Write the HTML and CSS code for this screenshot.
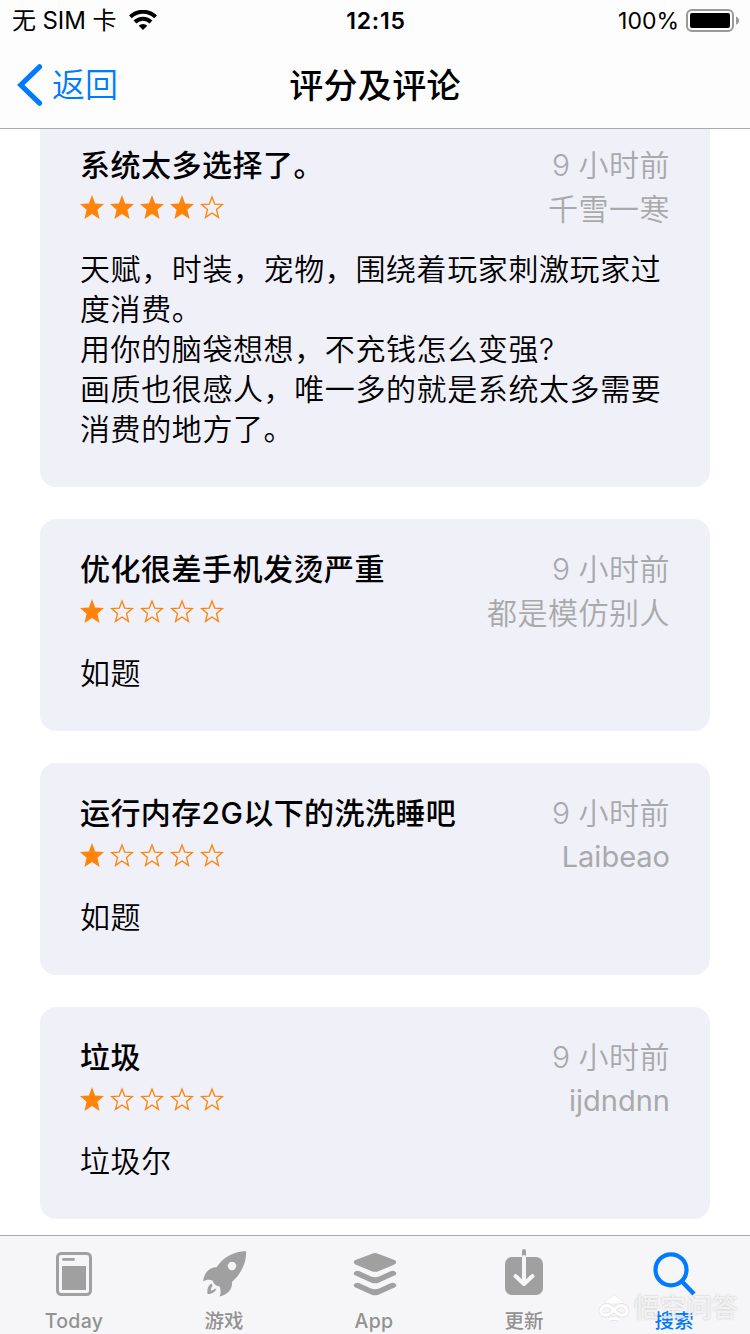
FILE: index.html
```html
<!DOCTYPE html>
<html lang="zh-CN">
<head>
<meta charset="utf-8">
<title>评分及评论</title>
<link rel="stylesheet" href="styles.css">
</head>
<body>
<svg width="0" height="0" class="defs">
  <defs>
    <path id="star" d="M12 0L15.100 8.500L24 8.900L17.400 14.700L19.600 24L12 19L4.400 24L6.600 14.700L0 8.900L8.900 8.500z"/>
    <path id="star-o" d="M12 2L14.700 9.100L22.400 9.500L16.500 14.500L18.500 22.400L12 18L5.500 22.400L7.500 14.500L1.600 9.500L9.300 9.100z"/>
    <g id="s4">
      <g fill="#ff8409"><use href="#star"/><use href="#star" x="30"/><use href="#star" x="60"/><use href="#star" x="90"/></g>
      <use href="#star-o" x="120" fill="none" stroke="#ff8409" stroke-width="1.3"/>
    </g>
    <g id="s1">
      <use href="#star" fill="#ff8409"/>
      <g fill="none" stroke="#ff8409" stroke-width="1.3"><use href="#star-o" x="30"/><use href="#star-o" x="60"/><use href="#star-o" x="90"/><use href="#star-o" x="120"/></g>
    </g>
  </defs>
</svg>
<div class="screen">
  <header class="header">
    <div class="status">
      <div class="carrier"><span>无 SIM 卡</span>
        <svg width="28" height="20" viewBox="0 0 28 20"><g fill="none" stroke="#000" stroke-width="4"><path d="M1.400 6.900a18 18 0 0 1 25.200 0"/><path d="M6 12a11.400 11.400 0 0 1 16 0"/></g><path d="M14 20l-4.300-4.200a6 6 0 0 1 8.600 0z"/></svg>
      </div>
      <div class="clock">12:15</div>
      <div class="power"><span>100%</span>
        <svg width="54" height="24" viewBox="0 0 54 24"><rect x="1" y="1" width="46" height="21" rx="5" fill="none" stroke="#999" stroke-width="2"/><rect x="4" y="4" width="40" height="15" rx="2"/><path d="M50 7.500q3 1 3 4t-3 4z" fill="#999"/></svg>
      </div>
    </div>
    <nav class="nav">
      <a class="back"><svg width="26" height="42" viewBox="0 0 26 42"><path d="M22.500 2.800L3.800 21l18.700 18.200" fill="none" stroke="#007aff" stroke-width="5.2" stroke-linecap="round"/></svg><span>返回</span></a>
      <h1>评分及评论</h1>
    </nav>
  </header>
  <main class="reviews">
    <article class="card">
      <div class="row"><h2>系统太多选择了。</h2><span class="meta">9 小时前</span></div>
      <div class="row"><svg class="stars" width="144" height="24"><use href="#s4"/></svg><span class="meta">千雪一寒</span></div>
      <p>天赋，时装，宠物，围绕着玩家刺激玩家过<br>度消费。<br>用你的脑袋想想，不充钱怎么变强?<br>画质也很感人，唯一多的就是系统太多需要<br>消费的地方了。</p>
    </article>
    <article class="card">
      <div class="row"><h2>优化很差手机发烫严重</h2><span class="meta">9 小时前</span></div>
      <div class="row"><svg class="stars" width="144" height="24"><use href="#s1"/></svg><span class="meta">都是模仿别人</span></div>
      <p>如题</p>
    </article>
    <article class="card">
      <div class="row"><h2 class="mixed">运行内存2G以下的洗洗睡吧</h2><span class="meta">9 小时前</span></div>
      <div class="row"><svg class="stars" width="144" height="24"><use href="#s1"/></svg><span class="meta latin">Laibeao</span></div>
      <p>如题</p>
    </article>
    <article class="card">
      <div class="row"><h2>垃圾</h2><span class="meta">9 小时前</span></div>
      <div class="row"><svg class="stars" width="144" height="24"><use href="#s1"/></svg><span class="meta latin">ijdndnn</span></div>
      <p>垃圾尔</p>
    </article>
  </main>
  <footer class="tabs">
    <a class="tab"><svg width="48" height="50" viewBox="0 0 48 50"><rect x="7.500" y="8.500" width="33" height="41" rx="3.800" fill="none" stroke="#a0a0a0" stroke-width="3"/><path d="M13.400 14.400h10.200" stroke="#a0a0a0" stroke-width="2.800" stroke-linecap="round"/><path d="M12 21h24v24H12z" fill="#a0a0a0"/></svg><span class="wide">Today</span></a>
    <a class="tab"><svg width="48" height="50" viewBox="0 0 48 50"><g fill="#a0a0a0"><path fill-rule="evenodd" d="M46 6C34 6.500 23 12 16.500 22.300C9 22.500 4 28 3 36.500C6 34.500 9.500 34.500 12.500 35.500Q14 40.500 19.500 41.500C21 45 21 48 19.500 51.500C27 50 32.500 45 32 37C41 29 47 17 46 6zM32 16.800a4.200 4.200 0 1 0 .01 0z"/></g><path d="M11.500 38.500C8 40.500 7 44 7.500 49C12 49 15.500 47 16.500 43.500C14 44 12.500 45.500 10.800 45.700C10.700 43.500 12 42 12.500 40.500z" fill="#a0a0a0"/></svg><span>游戏</span></a>
    <a class="tab"><svg width="48" height="50" viewBox="0 0 48 50"><path d="M22 8.700Q25 7.400 28 8.700L44.500 15Q48 17.200 44.500 19.400L29 26Q25 27.700 21 26L5.500 19.400Q2 17.200 5.500 15z" fill="#a0a0a0"/><path id="layer" d="M5.500 26.300Q7 25.300 9.500 26.300L21 31.500Q25 33 29 31.500L40.500 26.300Q43 25.300 44.500 26.300Q48 28.500 45 30.300L29 37.500Q25 39.200 21 37.500L5 30.300Q2 28.500 5.500 26.300z" fill="#a0a0a0"/><use href="#layer" y="12"/></svg><span class="wide">App</span></a>
    <a class="tab"><svg width="48" height="50" viewBox="0 0 48 50"><rect x="5" y="12" width="38" height="38" rx="7" fill="#a0a0a0"/><path d="M24 12V6" stroke="#a0a0a0" stroke-width="4" stroke-linecap="round"/><path d="M24 12v26M15.500 31l8.500 8 8.500-8" fill="none" stroke="#f6f6f8" stroke-width="4" stroke-linecap="round" stroke-linejoin="round"/></svg><span>更新</span></a>
    <a class="tab active"><svg width="48" height="50" viewBox="0 0 48 50"><circle cx="21" cy="24.800" r="15.500" fill="none" stroke="#007aff" stroke-width="4.200"/><path d="M31.500 36l12.500 13" stroke="#007aff" stroke-width="4.500"/></svg><span>搜索</span></a>
    <div class="watermark"><svg width="32" height="28" viewBox="0 0 32 28"><path d="M6 10q2-5 6-6l4-3.500 4 3.500q4 1 6 6z" fill="#fff" stroke="#e2e2e2" stroke-width=".6"/><g fill="none" stroke="#ddd" stroke-width="4.400"><path id="face" d="M16 16Q11 9.500 5.500 12.500Q.5 17 4.500 20.500Q10 23 16 16Q21 9.500 26.500 12.500Q31.500 17 27.500 20.500Q22 23 16 16z"/><path id="chin" d="M11 25.500Q16 23.500 21 25.500"/></g><g fill="none" stroke="#fff" stroke-width="3.200"><use href="#face"/><use href="#chin"/></g></svg><span>悟空问答</span></div>
  </footer>
</div>
</body>
</html>
```
FILE: styles.css
```css
* { box-sizing: border-box; }
body {
  margin: 0;
  background: #fff;
  color: #000;
  font-family: Inter, "Noto Sans CJK SC", sans-serif;
}
.defs { position: absolute; }
.screen {
  width: 750px;
  height: 1334px;
  display: flex;
  flex-direction: column;
  overflow: hidden;
}
svg { display: block; flex: none; }
h1, h2, p { margin: 0; }

.header {
  height: 129px;
  flex: none;
  background: #fdfdfd;
  border-bottom: 1px solid #a9a9b2;
}
.status {
  height: 41px;
  display: grid;
  grid-template-columns: 1fr auto 1fr;
  align-items: center;
  padding: 1px 10px 0 12px;
  font-size: 24px;
  line-height: 40px;
}
.carrier, .power { display: flex; align-items: center; }
.carrier { gap: 13px; letter-spacing: -.1px; }
.carrier svg { margin-top: -2px; }
.clock { font-weight: 600; font-size: 23px; letter-spacing: .8px; }
.power { justify-content: flex-end; gap: 7px; font-size: 23px; }
.power svg { margin-top: -1px; }
.nav {
  height: 87px;
  display: grid;
  grid-template-columns: 1fr auto 1fr;
  align-items: center;
  padding: 0 17px;
}
.back {
  display: flex;
  align-items: center;
  gap: 9px;
  color: #007aff;
  font-size: 33px;
  font-weight: 350;
  line-height: 44px;
}
.back span { padding-top: 1px; }
h1 {
  padding-top: 2px;
  font-size: 34px;
  line-height: 44px;
  font-weight: 500;
  letter-spacing: .3px;
}

.reviews {
  height: 1106px;
  flex: none;
  display: flex;
  flex-direction: column;
  justify-content: flex-end;
  gap: 32px;
  padding: 0 40px 16px;
  overflow: hidden;
}
.card {
  flex: none;
  padding: 28px 40px 38px;
  border-radius: 16px;
  background: #f0f0f9;
}
.row {
  height: 44px;
  display: flex;
  justify-content: space-between;
  line-height: 44px;
}
h2 {
  font-size: 30px;
  line-height: 44px;
  font-weight: 500;
  letter-spacing: .5px;
}
.mixed { letter-spacing: .4px; }
.meta {
  color: #a9a9ab;
  font-size: 30px;
  font-weight: 350;
  letter-spacing: .5px;
  word-spacing: -1px;
}
.latin { font-size: 29px; font-weight: 400; letter-spacing: 0; }
.stars { margin-top: 8px; overflow: visible; }
.card p {
  margin-top: 18px;
  font-size: 30px;
  font-weight: 350;
  line-height: 40px;
  letter-spacing: .6px;
  white-space: nowrap;
}

.tabs {
  position: relative;
  height: 99px;
  flex: none;
  display: grid;
  grid-template-columns: repeat(5, 150px);
  background: #f6f6f8;
  border-top: 1px solid #a9a9ad;
}
.tab {
  display: flex;
  flex-direction: column;
  align-items: center;
  padding: 9px 2px 0 0;
  color: #929292;
  font-size: 19.500px;
  font-weight: 500;
  line-height: 28px;
}
.tab svg { overflow: visible; }
.tab span { margin-top: 12px; }
.tab .wide { letter-spacing: .3px; }
.active { color: #007aff; }
/* Translucent brand mark laid over the last tab */
.watermark {
  position: absolute;
  right: 12px;
  bottom: 9px;
  display: flex;
  align-items: center;
  gap: 4px;
  color: rgba(255, 255, 255, .75);
  font-size: 26px;
  font-weight: 500;
  line-height: 34px;
  text-shadow: 0 0 2px rgba(150, 150, 150, .6);
}
.watermark svg { opacity: .9; }
```
